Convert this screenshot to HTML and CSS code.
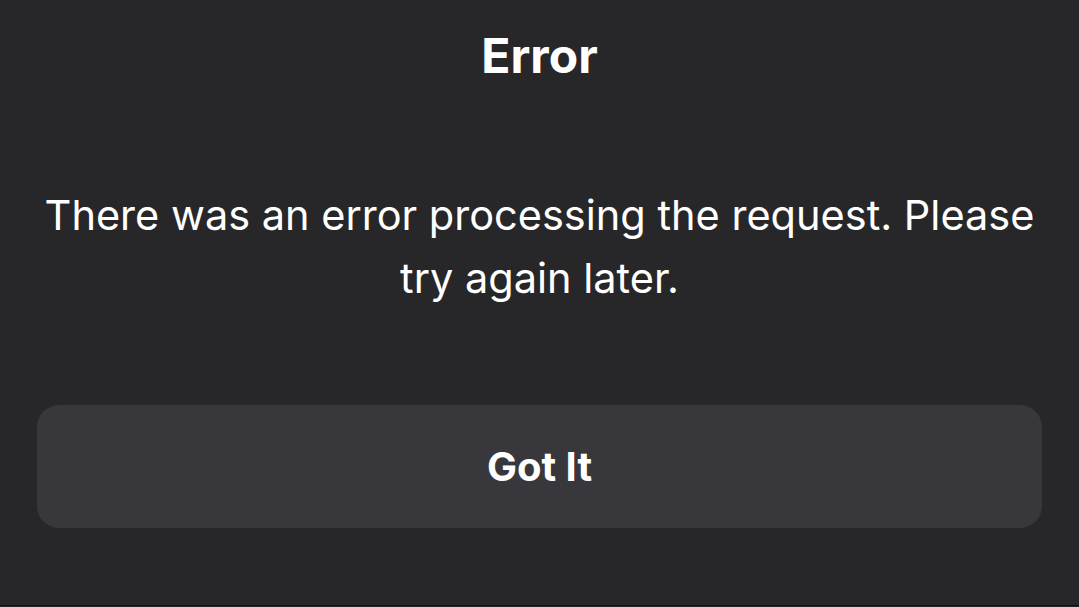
FILE: index.html
```html
<!DOCTYPE html>
<html lang="en">
<head>
    <meta charset="UTF-8">
    <meta name="viewport" content="width=device-width, initial-scale=1.0">
    <title>Error</title>
    <link rel="stylesheet" href="styles.css">
</head>
<body>
    <div class="sheet">
        <div class="sheet-title">Error</div>
        <div class="sheet-message">There was an error processing the request. Please try again later.</div>
        <button class="sheet-button">Got It</button>
    </div>
</body>
</html>
```

FILE: styles.css
```css
body {
    font-family: Inter, "Noto Sans", sans-serif;
    margin: 0;
    padding: 0;
    background-color: #272729;
    color: #ffffff;
}
.sheet {
    height: 606px;
    border-bottom: 1px solid #111112;
    display: flex;
    flex-direction: column;
    align-items: center;
    padding: 0 37px;
    box-sizing: border-box;
}
.sheet-title {
    font-size: 48px;
    font-weight: 700;
    margin-top: 27px;
    line-height: 58px;
}
.sheet-message {
    font-size: 41.5px;
    font-weight: 400;
    line-height: 63px;
    text-align: center;
    margin-top: 99px;
}
.sheet-button {
    width: 100%;
    height: 123px;
    margin-top: 95px;
    background-color: #38383c;
    border: none;
    border-radius: 22px;
    color: #ffffff;
    font-family: inherit;
    font-size: 40px;
    font-weight: 700;
    cursor: pointer;
}
```
